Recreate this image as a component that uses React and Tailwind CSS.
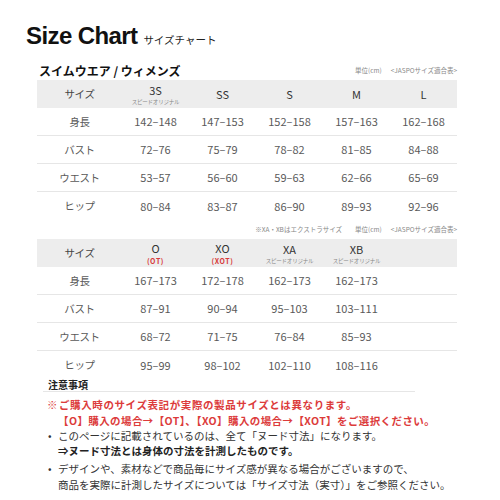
import React from "react";

const JP = "font-['Noto_Sans_CJK_JP',sans-serif]";

const table1 = {
  heads: [
    { main: "3S", sub: "スピードオリジナル" },
    { main: "SS" },
    { main: "S" },
    { main: "M" },
    { main: "L" },
  ],
  rows: [
    ["身長", "142–148", "147–153", "152–158", "157–163", "162–168"],
    ["バスト", "72–76", "75–79", "78–82", "81–85", "84–88"],
    ["ウエスト", "53–57", "56–60", "59–63", "62–66", "65–69"],
    ["ヒップ", "80–84", "83–87", "86–90", "89–93", "92–96"],
  ],
};

const table2 = {
  heads: [
    { main: "O", red: "(OT)" },
    { main: "XO", red: "(XOT)" },
    { main: "XA", sub: "スピードオリジナル" },
    { main: "XB", sub: "スピードオリジナル" },
    { main: "" },
  ],
  rows: [
    ["身長", "167–173", "172–178", "162–173", "162–173", ""],
    ["バスト", "87–91", "90–94", "95–103", "103–111", ""],
    ["ウエスト", "68–72", "71–75", "76–84", "85–93", ""],
    ["ヒップ", "95–99", "98–102", "102–110", "108–116", ""],
  ],
};

function SizeTable({ data }) {
  return (
    <div className="ml-[37px] w-[420px]">
      {/* header */}
      <div className="grid grid-cols-[85px_repeat(5,67px)] h-[28px] bg-[#ededed]">
        <div className="flex items-center justify-center text-[10.5px] tracking-[-0.4px] text-[#444]">
          サイズ
        </div>
        {data.heads.map((h, i) => (
          <div key={i} className="flex flex-col items-center justify-center">
            <span className="text-[11px] leading-[16px] text-[#333]">{h.main}</span>
            {h.sub && (
              <span className="text-[5.5px] leading-[8px] text-[#888] tracking-[-0.2px]">{h.sub}</span>
            )}
            {h.red && (
              <span className="text-[7px] leading-[10px] text-[#d83a3a] font-bold tracking-[0.6px]">
                {h.red}
              </span>
            )}
          </div>
        ))}
      </div>
      {/* body */}
      {data.rows.map((r, i) => (
        <div
          key={i}
          className={
            "grid grid-cols-[85px_repeat(5,67px)] h-[28px] " +
            (i < data.rows.length - 1 ? "border-b border-[#e6e6e6]" : "")
          }
        >
          {r.map((c, j) => (
            <div
              key={j}
              className={
                "flex items-center justify-center text-[#5a5a5a] " +
                (j === 0 ? "text-[10.5px] tracking-[-0.4px]" : "text-[11px]")
              }
            >
              {c}
            </div>
          ))}
        </div>
      ))}
    </div>
  );
}

function UnitNote() {
  return (
    <div className="flex items-center gap-[9px] text-[6.5px] text-[#888]">
      <span>単位(cm)</span>
      <span>&lt;JASPOサイズ適合表&gt;</span>
    </div>
  );
}

export default function App() {
  return (
    <div className={"w-[500px] h-[500px] bg-white overflow-hidden " + JP}>
      {/* Title */}
      <div className="flex items-baseline pt-[24px] pl-[26px] h-[48px]">
        <span className="font-['Liberation_Sans',Arial,sans-serif] font-bold text-[24px] leading-[24px] tracking-[-0.6px] text-[#111]">
          Size Chart
        </span>
        <span className="ml-[6px] text-[10.5px] text-[#222]">サイズチャート</span>
      </div>

      {/* Subtitle */}
      <div className="flex items-center justify-between mt-[15px] h-[16px] pl-[39px] pr-[43px]">
        <span className="font-bold text-[12px] text-[#111]">スイムウエア / ウィメンズ</span>
        <UnitNote />
      </div>

      <div className="mt-[1px]">
        <SizeTable data={table1} />
      </div>

      {/* note row for table 2 */}
      <div className="h-[19px] flex items-center justify-end gap-[13px] pr-[43px] text-[6.5px] text-[#888]">
        <span>※XA・XBはエクストラサイズ</span>
        <UnitNote />
      </div>

      <SizeTable data={table2} />

      {/* Notes */}
      <div className="ml-[43px] w-[372px] h-[13px] border-b border-[#e6e6e6] pl-[5px] text-[10px] leading-[12px] font-bold text-[#222]">
        注意事項
      </div>

      <div className="pl-[47px] mt-[5px] text-[10.5px] leading-[15.5px] font-bold text-[#dc3b3b] tracking-[0.6px]">
        <div className="flex">
          <span className="w-[12px]">※</span>
          <span>ご購入時のサイズ表記が実際の製品サイズとは異なります。</span>
        </div>
        <div className="pl-[11px] tracking-[0.4px]">
          【O】購入の場合→【OT】、【XO】購入の場合→【XOT】をご選択ください。
        </div>
      </div>

      <div className="pl-[48px] text-[10.5px] leading-[15px] text-[#333]">
        <div className="flex">
          <span className="w-[10px]">•</span>
          <span>このページに記載されているのは、全て「ヌード寸法」になります。</span>
        </div>
        <div className="pl-[10px] font-bold text-[#222]">⇒ヌード寸法とは身体の寸法を計測したものです。</div>
      </div>

      <div className="pl-[48px] mt-[3px] text-[10.5px] leading-[16px] text-[#333]">
        <div className="flex">
          <span className="w-[10px]">•</span>
          <span>デザインや、素材などで商品毎にサイズ感が異なる場合がございますので、</span>
        </div>
        <div className="pl-[10px]">商品を実際に計測したサイズについては「サイズ寸法（実寸）」をご参照ください。</div>
      </div>
    </div>
  );
}
